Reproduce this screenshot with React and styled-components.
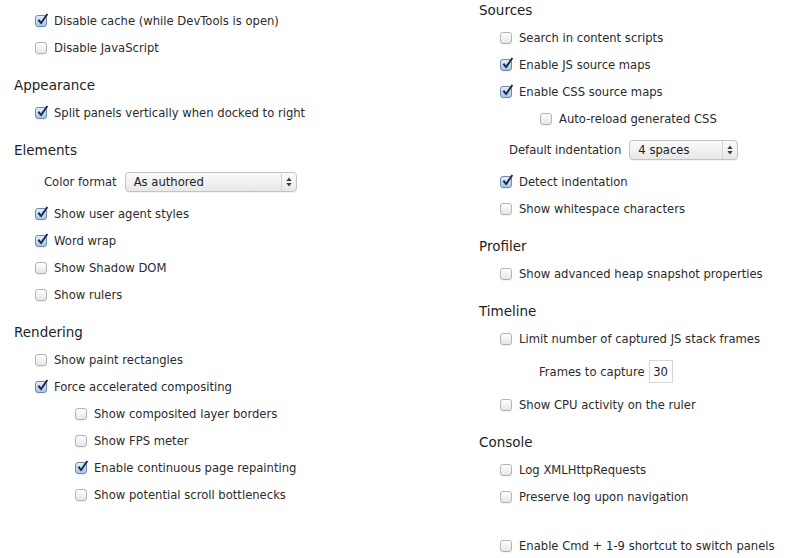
import styled, { createGlobalStyle } from 'styled-components';

const GlobalStyle = createGlobalStyle`
  html, body {
    margin: 0;
    padding: 0;
    background: #ffffff;
    overflow: hidden;
  }
  body {
    font-family: "DejaVu Sans", "Liberation Sans", sans-serif;
    color: #2b2b2b;
  }
`;

const Page = styled.div`
  display: grid;
  grid-template-columns: 465px 1fr;
  width: 785px;
  height: 558px;
`;

const Column = styled.div`
  display: flex;
  flex-direction: column;
  padding: ${(p) => p.$top}px 0 0 14px;
`;

const Heading = styled.h3`
  margin: 14px 0 4px;
  height: 20px;
  line-height: 20px;
  font-size: 13.5px;
  font-weight: normal;
  color: #1e1e1e;

  &:first-child {
    margin-top: 0;
  }
`;

const Row = styled.label`
  display: flex;
  align-items: center;
  height: 27px;
  padding-left: ${(p) => 21 + (p.$indent || 0) * 40}px;
  font-size: 11.6px;
  white-space: nowrap;
`;

const Spacer = styled.div`
  height: ${(p) => p.$h}px;
`;

const Box = styled.span`
  position: relative;
  box-sizing: border-box;
  width: 12px;
  height: 12px;
  margin-right: 7px;
  border-radius: 3px;
  border: 1px solid ${(p) => (p.$checked ? '#7088ad' : '#b2b2b2')};
  background: ${(p) =>
    p.$checked
      ? 'linear-gradient(#e3edf9, #a9c5ea)'
      : 'linear-gradient(#ffffff, #e6e6e6)'};
  box-shadow: 0 1px 1px rgba(0, 0, 0, 0.06);
  flex-shrink: 0;
`;

const Tick = styled.svg`
  position: absolute;
  left: 0px;
  top: -3px;
  width: 13px;
  height: 13px;
  overflow: visible;
`;

const Checkbox = ({ checked }) => (
  <Box $checked={checked}>
    {checked && (
      <Tick viewBox="0 0 13 13">
        <path
          d="M1.6 7.4 L3.2 6 L5 8.4 L10.6 0.6 L12.2 1.6 L5.2 11.6 Z"
          fill="#1c2740"
        />
      </Tick>
    )}
  </Box>
);

const Option = ({ checked, indent, children }) => (
  <Row $indent={indent}>
    <Checkbox checked={checked} />
    {children}
  </Row>
);

const FieldRow = styled.div`
  display: flex;
  align-items: center;
  height: ${(p) => p.$h}px;
  padding-left: ${(p) => p.$pad}px;
  gap: ${(p) => p.$gap}px;
  font-size: 11.6px;
  white-space: nowrap;
`;

const SelectBox = styled.div`
  box-sizing: border-box;
  display: flex;
  align-items: stretch;
  width: ${(p) => p.$w}px;
  height: 20px;
  border: 1px solid #c2c2c2;
  border-radius: 4px;
  background: linear-gradient(#fbfbfb, #e8e8e8);
  box-shadow: 0 1px 1px rgba(0, 0, 0, 0.06);
`;

const SelectText = styled.span`
  flex: 1;
  padding-left: 8px;
  line-height: 18px;
  color: #222;
`;

const SelectArrows = styled.span`
  display: flex;
  align-items: center;
  justify-content: center;
  width: 14px;
  border-left: 1px solid #d4d4d4;
`;

const Select = ({ width, value }) => (
  <SelectBox $w={width}>
    <SelectText>{value}</SelectText>
    <SelectArrows>
      <svg width="6" height="10" viewBox="0 0 6 10">
        <path d="M3 0.5 L5.6 4 L0.4 4 Z" fill="#3a3a3a" />
        <path d="M3 9.5 L5.6 6 L0.4 6 Z" fill="#3a3a3a" />
      </svg>
    </SelectArrows>
  </SelectBox>
);

const NumberBox = styled.span`
  box-sizing: border-box;
  display: flex;
  align-items: center;
  justify-content: center;
  width: 24px;
  height: 23px;
  border: 1px solid #d6d6d6;
  background: #fff;
  color: #222;
`;

export default function App() {
  return (
    <>
      <GlobalStyle />
      <Page>
        <Column $top={7}>
          <Option checked>Disable cache (while DevTools is open)</Option>
          <Option>Disable JavaScript</Option>

          <Heading>Appearance</Heading>
          <Option checked>Split panels vertically when docked to right</Option>

          <Heading>Elements</Heading>
          <FieldRow $h={36} $pad={30} $gap={8}>
            Color format
            <Select width={172} value="As authored" />
          </FieldRow>
          <Option checked>Show user agent styles</Option>
          <Option checked>Word wrap</Option>
          <Option>Show Shadow DOM</Option>
          <Option>Show rulers</Option>

          <Heading>Rendering</Heading>
          <Option>Show paint rectangles</Option>
          <Option checked>Force accelerated compositing</Option>
          <Option indent={1}>Show composited layer borders</Option>
          <Option indent={1}>Show FPS meter</Option>
          <Option indent={1} checked>Enable continuous page repainting</Option>
          <Option indent={1}>Show potential scroll bottlenecks</Option>
        </Column>

        <Column $top={0}>
          <Heading>Sources</Heading>
          <Option>Search in content scripts</Option>
          <Option checked>Enable JS source maps</Option>
          <Option checked>Enable CSS source maps</Option>
          <Option indent={1}>Auto-reload generated CSS</Option>
          <FieldRow $h={36} $pad={30} $gap={8}>
            Default indentation
            <Select width={109} value="4 spaces" />
          </FieldRow>
          <Option checked>Detect indentation</Option>
          <Option>Show whitespace characters</Option>

          <Heading>Profiler</Heading>
          <Option>Show advanced heap snapshot properties</Option>

          <Heading>Timeline</Heading>
          <Option>Limit number of captured JS stack frames</Option>
          <FieldRow $h={39} $pad={60} $gap={4}>
            Frames to capture
            <NumberBox>30</NumberBox>
          </FieldRow>
          <Option>Show CPU activity on the ruler</Option>

          <Heading>Console</Heading>
          <Option>Log XMLHttpRequests</Option>
          <Option>Preserve log upon navigation</Option>
          <Spacer $h={22} />
          <Option>Enable Cmd + 1-9 shortcut to switch panels</Option>
        </Column>
      </Page>
    </>
  );
}
